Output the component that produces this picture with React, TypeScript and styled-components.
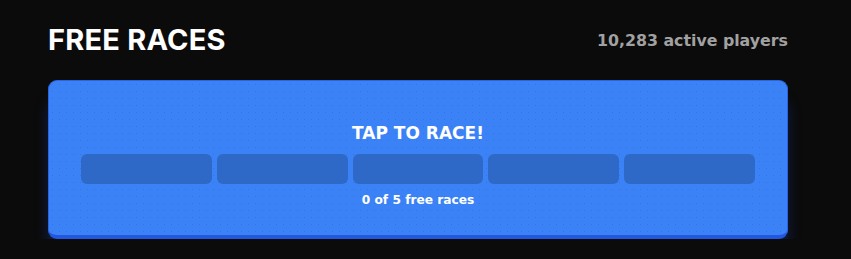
import React from 'react';
import styled, { createGlobalStyle } from 'styled-components';

const GlobalStyle = createGlobalStyle`
	html, body {
		margin: 0;
		padding: 0;
		background: #0b0b0b;
		font-family: 'Inter', 'Open Sans', sans-serif;
	}
`;

const PageStyleC = styled.div`
	width: 740px;
	padding: 20px 0 0 48px;
`;

const HeaderStyleC = styled.div`
	display: flex;
	justify-content: space-between;
	align-items: center;
	height: 38px;
	margin-bottom: 22px;
`;

const TitleStyleC = styled.h1`
	margin: 0;
	font-size: 29px;
	font-weight: 700;
	color: #ffffff;
	letter-spacing: 0.2px;
`;

const PlayersStyleC = styled.span`
	font-family: 'DejaVu Sans', 'Inter', sans-serif;
	font-size: 15.8px;
	font-weight: 700;
	color: #a1a1a1;
	margin-top: 2px;
`;

const CardStyleC = styled.button`
	display: flex;
	flex-direction: column;
	align-items: center;
	box-sizing: border-box;
	width: 740px;
	height: 159px;
	padding: 42px 32px 0;
	border: 1px solid #2a64e6;
	border-bottom: 4px solid #2258e0;
	border-radius: 9px;
	background-color: #3b82f6;
	background-image: radial-gradient(rgba(30, 70, 180, 0.22) 0.8px, transparent 1px);
	background-size: 7px 7px;
	box-shadow: 0 20px 16px -3px rgba(37, 80, 220, 0.4);
	cursor: pointer;
	font-family: 'DejaVu Sans', 'Inter', sans-serif;
`;

const CardTitleStyleC = styled.div`
	font-size: 17px;
	font-weight: 700;
	color: #ffffff;
	margin-bottom: 11px;
`;

const SegmentRowStyleC = styled.div`
	display: flex;
	gap: 5px;
	width: 100%;
	margin-bottom: 9px;
`;

const SegmentStyleC = styled.div<{ filled: boolean }>`
	flex: 1;
	height: 30px;
	border-radius: 6px;
	background: ${(p) => (p.filled ? '#ffffff' : '#2f69c8')};
`;

const CountStyleC = styled.div`
	font-size: 12.2px;
	font-weight: 700;
	color: #ffffff;
`;

function App() {
	const total = 5;
	const used = 0;
	return (
		<>
			<GlobalStyle />
			<PageStyleC>
				<HeaderStyleC>
					<TitleStyleC>FREE RACES</TitleStyleC>
					<PlayersStyleC>10,283 active players</PlayersStyleC>
				</HeaderStyleC>
				<CardStyleC>
					<CardTitleStyleC>TAP TO RACE!</CardTitleStyleC>
					<SegmentRowStyleC>
						{Array.from({ length: total }).map((_, i) => (
							<SegmentStyleC key={i} filled={i < used} />
						))}
					</SegmentRowStyleC>
					<CountStyleC>
						{used} of {total} free races
					</CountStyleC>
				</CardStyleC>
			</PageStyleC>
		</>
	);
}

export default App;
